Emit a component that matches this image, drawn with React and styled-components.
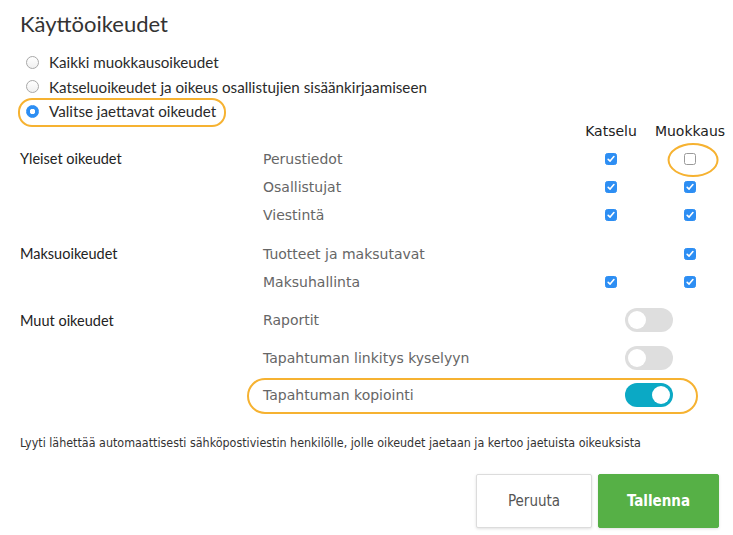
import React from 'react';
import styled, {createGlobalStyle, css} from 'styled-components';

const orange = '#f6b231';
const blue = '#2d8ef3';
const teal = '#0ba9c5';
const green = '#56b046';

const GlobalStyle = createGlobalStyle`
  body {
    margin: 0;
    background: #fff;
    font-family: Lato, "Noto Sans", sans-serif;
    color: #333;
  }
`;

/////////////// LAYOUT /////////////
const Page = styled.div`
  width: 733px;
  height: 535px;
  box-sizing: border-box;
  padding: 10px 4px 0 20px;
  overflow: hidden;
`;

const Title = styled.h1`
  margin: 0;
  font-family: Lato, sans-serif;
  font-size: 22px;
  line-height: 27px;
  font-weight: 400;
  color: #333;
`;

/////////////// RADIOS /////////////
const RadioList = styled.div`
  margin-top: 13px;
  padding-left: 6px;
`;

const RadioRow = styled.label`
  position: relative;
  display: flex;
  align-items: center;
  height: 24.5px;
  width: max-content;
  font-family: Lato, sans-serif;
  font-size: 15.2px;
  color: #2a2a2a;
  ${props =>
    props.$ring &&
    css`
      &::after {
        content: '';
        position: absolute;
        left: -8px;
        right: -10px;
        top: -1px;
        bottom: -3px;
        border: 2px solid ${orange};
        border-radius: 14px;
      }
    `}
`;

const RadioDot = styled.span`
  box-sizing: border-box;
  width: 13px;
  height: 13px;
  margin-right: 10px;
  border-radius: 50%;
  border: 1px solid ${props => (props.$checked ? blue : '#a8a8a8')};
  background: ${props =>
    props.$checked
      ? `radial-gradient(circle, #fff 0 2.5px, ${blue} 3px)`
      : 'linear-gradient(#fff, #f0f0f0)'};
`;

/////////////// TABLE /////////////
const HeaderRow = styled.div`
  display: grid;
  grid-template-columns: 551.5px 79px 79px;
  height: 16px;
  margin-top: -1px;
  align-items: center;
  font-family: "DejaVu Sans", Verdana, sans-serif;
  font-size: 14px;
  color: #222;
`;

const HeaderCell = styled.div`
  text-align: center;
  white-space: nowrap;
`;

const Group = styled.div`
  display: grid;
  grid-template-columns: 243px 1fr;
  margin-top: ${props => props.$gap || '6px'};
`;

const GroupLabel = styled.div`
  display: flex;
  align-items: center;
  height: ${props => props.$h || '28px'};
  font-family: Lato, sans-serif;
  font-size: 14.5px;
  color: #222;
`;

const Item = styled.div`
  position: relative;
  display: grid;
  grid-template-columns: 308.5px 79px 79px;
  align-items: center;
  height: ${props => props.$h || '28px'};
  ${props =>
    props.$ring &&
    css`
      &::after {
        content: '';
        position: absolute;
        left: -16px;
        right: 32px;
        top: 1px;
        bottom: 0;
        border: 2.5px solid ${orange};
        border-radius: 18px;
      }
    `}
`;

const ItemLabel = styled.div`
  font-family: "DejaVu Sans", Verdana, sans-serif;
  font-size: 14px;
  color: #666;
  white-space: nowrap;
`;

const Cell = styled.div`
  position: relative;
  display: flex;
  justify-content: center;
  align-items: center;
  grid-column: ${props => props.$span || 'auto'};
  ${props =>
    props.$ring &&
    css`
      &::after {
        content: '';
        position: absolute;
        left: 50%;
        top: 50%;
        width: 47px;
        height: 30px;
        transform: translate(-44%, -47%);
        border: 2.5px solid ${orange};
        border-radius: 50%;
      }
    `}
`;

const Box = styled.span`
  box-sizing: border-box;
  display: flex;
  align-items: center;
  justify-content: center;
  width: 12px;
  height: 12px;
  border-radius: 2.5px;
  background: ${props => (props.$checked ? blue : '#fff')};
  border: 1px solid ${props => (props.$checked ? blue : '#9a9a9a')};
`;

const Toggle = styled.span`
  position: relative;
  width: 48px;
  height: 24px;
  margin-right: 4px;
  border-radius: 12px;
  background: ${props => (props.$on ? teal : '#dedede')};
  &::before {
    content: '';
    position: absolute;
    top: 3px;
    left: ${props => (props.$on ? '27px' : '3px')};
    width: 18px;
    height: 18px;
    border-radius: 50%;
    background: #fff;
  }
`;

/////////////// FOOTER /////////////
const Note = styled.p`
  margin: 21px 0 0;
  font-family: "DejaVu Sans Condensed", "DejaVu Sans", sans-serif;
  font-size: 12.4px;
  line-height: 16px;
  color: #333;
`;

const Actions = styled.div`
  display: flex;
  justify-content: flex-end;
  gap: 6px;
  margin-top: 23px;
  padding-right: 10px;
`;

const Button = styled.button`
  width: ${props => props.$w || '116px'};
  height: 54px;
  border-radius: 2px;
  font-family: "DejaVu Sans Condensed", "DejaVu Sans", sans-serif;
  font-size: 15px;
  cursor: pointer;
  border: 1px solid ${props => (props.$primary ? green : '#dcdcdc')};
  background: ${props => (props.$primary ? green : '#fff')};
  color: ${props => (props.$primary ? '#fff' : '#555')};
  font-weight: ${props => (props.$primary ? 700 : 400)};
  box-shadow: 0 1px 3px rgba(0, 0, 0, 0.12);
`;

const Check = ({checked}) => (
  <Box $checked={checked}>
    {checked && (
      <svg width="8" height="8" viewBox="0 0 8 8">
        <path d="M1.2 4.3 L3.1 6.1 L6.9 1.6" fill="none" stroke="#fff" strokeWidth="1.6" strokeLinecap="round" strokeLinejoin="round" />
      </svg>
    )}
  </Box>
);

const radios = [
  {label: 'Kaikki muokkausoikeudet'},
  {label: 'Katseluoikeudet ja oikeus osallistujien sisäänkirjaamiseen'},
  {label: 'Valitse jaettavat oikeudet', checked: true},
];

const groups = [
  {
    label: 'Yleiset oikeudet',
    gap: '6px',
    items: [
      {label: 'Perustiedot', view: true, edit: false, ring: true},
      {label: 'Osallistujat', view: true, edit: true},
      {label: 'Viestintä', view: true, edit: true},
    ],
  },
  {
    label: 'Maksuoikeudet',
    gap: '11px',
    items: [
      {label: 'Tuotteet ja maksutavat', view: null, edit: true},
      {label: 'Maksuhallinta', view: true, edit: true},
    ],
  },
  {
    label: 'Muut oikeudet',
    gap: '6px',
    toggles: true,
    items: [
      {label: 'Raportit', on: false},
      {label: 'Tapahtuman linkitys kyselyyn', on: false},
      {label: 'Tapahtuman kopiointi', on: true, ring: true},
    ],
  },
];

export default function App() {
  return (
    <Page>
      <GlobalStyle />
      <Title>Käyttöoikeudet</Title>
      <RadioList>
        {radios.map(r => (
          <RadioRow key={r.label} $ring={r.checked}>
            <RadioDot $checked={r.checked} />
            {r.label}
          </RadioRow>
        ))}
      </RadioList>

      <HeaderRow>
        <span />
        <HeaderCell>Katselu</HeaderCell>
        <HeaderCell>Muokkaus</HeaderCell>
      </HeaderRow>

      {groups.map(g => {
        const h = g.toggles ? '37.5px' : '28px';
        return (
          <Group key={g.label} $gap={g.gap}>
            <GroupLabel $h={h}>{g.label}</GroupLabel>
            <div>
              {g.items.map(it => (
                <Item key={it.label} $h={h} $ring={g.toggles && it.ring}>
                  <ItemLabel>{it.label}</ItemLabel>
                  {g.toggles ? (
                    <Cell $span="2 / 4">
                      <Toggle $on={it.on} />
                    </Cell>
                  ) : (
                    <>
                      <Cell>{it.view !== null && <Check checked={it.view} />}</Cell>
                      <Cell $ring={it.ring}>
                        <Check checked={it.edit} />
                      </Cell>
                    </>
                  )}
                </Item>
              ))}
            </div>
          </Group>
        );
      })}

      <Note>
        Lyyti lähettää automaattisesti sähköpostiviestin henkilölle, jolle oikeudet jaetaan ja kertoo jaetuista oikeuksista
      </Note>

      <Actions>
        <Button>Peruuta</Button>
        <Button $primary $w="121px">
          Tallenna
        </Button>
      </Actions>
    </Page>
  );
}
